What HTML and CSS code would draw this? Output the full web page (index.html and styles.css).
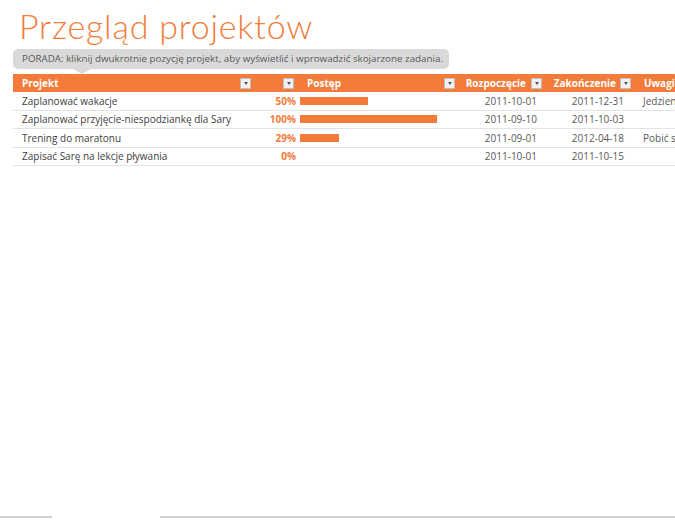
FILE: index.html
```html
<!DOCTYPE html>
<html lang="pl">
<head>
<meta charset="utf-8">
<title>Przegląd projektów</title>
<link rel="stylesheet" href="styles.css">
</head>
<body>
<div class="page">
  <h1 class="title">Przegląd projektów</h1>
  <div class="tip">PORADA: kliknij dwukrotnie pozycję projekt, aby wyświetlić i wprowadzić skojarzone zadania.</div>
  <div class="table">
    <div class="row head">
      <div class="c c1"><span class="lbl">Projekt</span><span class="dd"></span></div>
      <div class="c c2"><span class="dd"></span></div>
      <div class="c c3"><span class="lbl">Postęp</span><span class="dd"></span></div>
      <div class="c c4"><span class="lbl">Rozpoczęcie</span><span class="dd"></span></div>
      <div class="c c5"><span class="lbl">Zakończenie</span><span class="dd"></span></div>
      <div class="c c6"><span class="lbl">Uwagi</span></div>
    </div>
    <div class="row">
      <div class="c c1">Zaplanować wakacje</div>
      <div class="c c2 pct">50%</div>
      <div class="c c3"><span class="bar" style="width:68px"></span></div>
      <div class="c c4 date">2011-10-01</div>
      <div class="c c5 date">2011-12-31</div>
      <div class="c c6">Jedzienie</div>
    </div>
    <div class="row">
      <div class="c c1">Zaplanować przyjęcie-niespodziankę dla Sary</div>
      <div class="c c2 pct">100%</div>
      <div class="c c3"><span class="bar" style="width:137px"></span></div>
      <div class="c c4 date">2011-09-10</div>
      <div class="c c5 date">2011-10-03</div>
      <div class="c c6"></div>
    </div>
    <div class="row">
      <div class="c c1">Trening do maratonu</div>
      <div class="c c2 pct">29%</div>
      <div class="c c3"><span class="bar" style="width:39px"></span></div>
      <div class="c c4 date">2011-09-01</div>
      <div class="c c5 date">2012-04-18</div>
      <div class="c c6">Pobić swój rekord</div>
    </div>
    <div class="row">
      <div class="c c1">Zapisać Sarę na lekcje pływania</div>
      <div class="c c2 pct">0%</div>
      <div class="c c3"></div>
      <div class="c c4 date">2011-10-01</div>
      <div class="c c5 date">2011-10-15</div>
      <div class="c c6"></div>
    </div>
  </div>
  <div class="spacer"></div>
  <div class="tabs">
    <span class="tabline t1"></span>
    <span class="tabgap"></span>
    <span class="tabline t2"></span>
  </div>
</div>
</body>
</html>
```

FILE: styles.css
```css
* { box-sizing: border-box; }
html, body { margin: 0; padding: 0; background: #fff; }
body {
  width: 675px;
  height: 520px;
  overflow: hidden;
  font-family: "Open Sans", "DejaVu Sans", sans-serif;
  color: #404040;
}
.page {
  display: flex;
  flex-direction: column;
  height: 520px;
}
.title {
  margin: 0;
  padding: 7px 0 0 19px;
  height: 49px;
  font-family: "Lato", "Open Sans", sans-serif;
  font-weight: 300;
  font-size: 34px;
  line-height: 38px;
  color: #f47b3a;
  letter-spacing: 0.8px;
  white-space: nowrap;
}
.tip {
  position: relative;
  margin-left: 13px;
  width: 436px;
  height: 20px;
  background: #d9d9d9;
  border-radius: 5px;
  font-size: 9.8px;
  line-height: 20px;
  padding-left: 9px;
  color: #595959;
  white-space: nowrap;
  z-index: 1;
}
.tip::after {
  content: "";
  position: absolute;
  left: 60px;
  bottom: -5px;
  border-left: 9px solid transparent;
  border-right: 9px solid transparent;
  border-top: 5px solid #d9d9d9;
}
.table {
  margin-left: 13px;
  margin-top: 5px;
  width: 662px;
  overflow: hidden;
}
.row {
  display: grid;
  grid-template-columns: 241px 43px 161px 87px 89px 41px;
  height: 18.5px;
  border-bottom: 1px solid #e3e3e3;
  font-size: 10px;
  align-items: center;
}
.row.head {
  height: 18px;
  background: #f47b3a;
  border-bottom: none;
  color: #fff;
  font-weight: 700;
}
.c {
  white-space: nowrap;
  overflow: hidden;
  display: flex;
  align-items: center;
  height: 100%;
}
.c1 { padding-left: 9px; }
.c3 { padding-left: 3px; }
.c6 { padding-left: 9px; color: #595959; }
.head .c1 { justify-content: space-between; padding-right: 3px; }
.head .c2 { justify-content: flex-end; padding-right: 3px; }
.head .c3 { justify-content: space-between; padding-left: 10px; padding-right: 3px; }
.head .c4 { justify-content: flex-end; padding-right: 3px; gap: 5px; }
.head .c5 { justify-content: flex-end; padding-right: 3px; gap: 4px; }
.head .c6 { padding-left: 10px; color: #fff; }
.dd {
  display: inline-block;
  width: 11px;
  height: 11px;
  background: #f2f2f2;
  border: 1px solid #bfbfbf;
  position: relative;
  flex: none;
}
.dd::after {
  content: "";
  position: absolute;
  left: 2.5px;
  top: 3.5px;
  border-left: 2.5px solid transparent;
  border-right: 2.5px solid transparent;
  border-top: 3px solid #555;
}
.pct {
  justify-content: flex-end;
  padding-right: 1px;
  color: #f47b3a;
  font-weight: 700;
}
.bar {
  display: block;
  height: 8px;
  background: #f47b3a;
}
.date {
  justify-content: flex-end;
  color: #595959;
}
.c4.date { padding-right: 8px; }
.c5.date { padding-right: 10px; }
.spacer { flex: 1; }
.tabs {
  display: flex;
  height: 4px;
  align-items: flex-start;
}
.tabline {
  display: block;
  height: 2px;
  background: #d0d0d0;
}
.t1 { width: 52px; }
.tabgap { width: 108px; }
.t2 { flex: 1; }
```
